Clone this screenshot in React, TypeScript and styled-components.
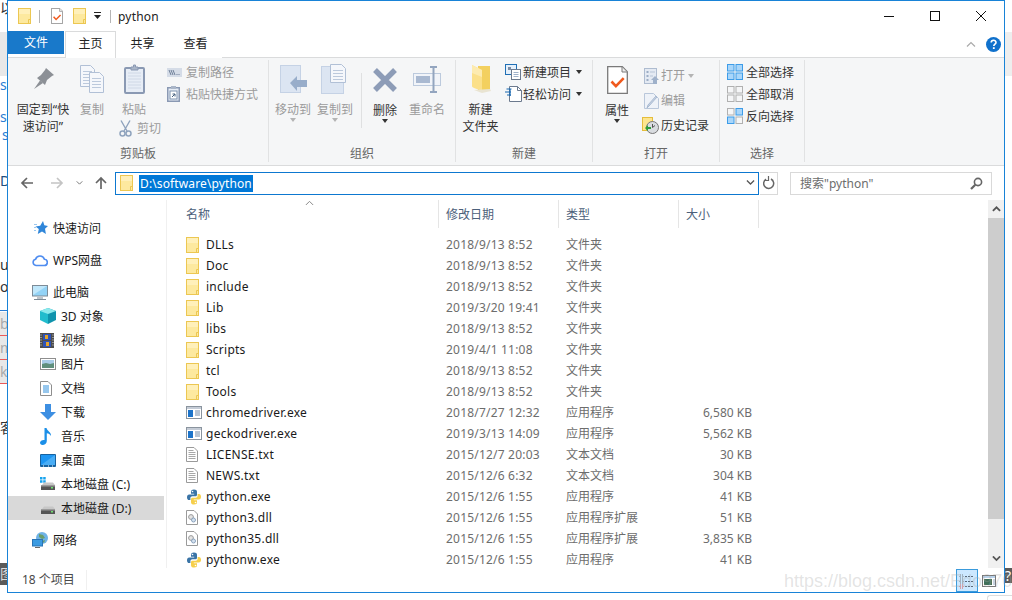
import React from "react";
import styled, { createGlobalStyle } from "styled-components";

const GlobalStyle = createGlobalStyle`
  html, body {
    margin: 0;
    padding: 0;
    background: #fff;
  }
  * {
    box-sizing: border-box;
  }
`;

const Page = styled.div`
  position: relative;
  display: flex;
  width: 1012px;
  height: 600px;
  overflow: hidden;
  background: #fff;
  font-family: "Noto Sans", "Noto Sans CJK SC", sans-serif;
  font-size: 12px;
  line-height: 17px;
  color: #1a1a1a;
`;

const Strip = styled.div`
  flex: none;
  width: 7px;
  height: 600px;
  overflow: hidden;
`;

const StripBit = styled.div<{ $h: number; $bg?: string; $color?: string; $pad?: number; $wavy?: boolean }>`
  height: ${(p) => p.$h}px;
  padding-left: ${(p) => p.$pad ?? 0}px;
  background: ${(p) => p.$bg ?? "transparent"};
  color: ${(p) => p.$color ?? "#333"};
  font-size: 14px;
  line-height: ${(p) => p.$h}px;
  white-space: nowrap;
  overflow: hidden;
  border-bottom: ${(p) => (p.$wavy ? "1px solid #ea5a5a" : "none")};
`;

const Middle = styled.div`
  flex: none;
  width: 998px;
  height: 600px;
`;

const Win = styled.div`
  display: flex;
  flex-direction: column;
  height: 593px;
  border: 1px solid #1883d7;
`;

const FooterCorner = styled.div`
  height: 5px;
  margin: 2px 0 0 980px;
  border-top: 1px solid #ddd;
  border-left: 1px solid #ddd;
  border-top-left-radius: 3px;
`;

const TitleBar = styled.div`
  display: flex;
  align-items: center;
  height: 30px;
  padding-left: 10px;
`;

const QuickItem = styled.div<{ $ml?: number }>`
  display: flex;
  align-items: center;
  margin-left: ${(p) => p.$ml ?? 0}px;
`;

const QuickSep = styled.div<{ $ml: number }>`
  width: 1px;
  height: 13px;
  margin-left: ${(p) => p.$ml}px;
  background: #b5b5b5;
`;

const Title = styled.div`
  margin-left: 7px;
  flex: 1;
  color: #222;
  letter-spacing: 0.2px;
`;

const WinButton = styled.div`
  display: flex;
  align-items: center;
  justify-content: center;
  width: 46px;
  height: 30px;
`;

const TabRow = styled.div`
  display: flex;
  align-items: flex-start;
  height: 27px;
  border-bottom: 1px solid #dadbdc;
`;

const FileTab = styled.div`
  width: 56px;
  height: 23px;
  background: #1979ca;
  color: #fff;
  text-align: center;
  line-height: 23px;
`;

const Tab = styled.div<{ $active?: boolean }>`
  width: ${(p) => (p.$active ? "51px" : "53px")};
  height: 27px;
  margin-left: ${(p) => (p.$active ? "1px" : "0")};
  background: #fff;
  border: 1px solid ${(p) => (p.$active ? "#dadbdc" : "transparent")};
  border-bottom: none;
  text-align: center;
  line-height: 24px;
  color: #222;
`;

const TabTail = styled.div`
  flex: 1;
  display: flex;
  align-items: center;
  justify-content: flex-end;
  gap: 10px;
  height: 26px;
  padding-right: 3px;
`;

const Ribbon = styled.div`
  display: flex;
  height: 108px;
  padding: 2px 0 3px;
  background: #f5f6f7;
  border-bottom: 1px solid #dadbdc;
`;

const Group = styled.div<{ $w: number }>`
  flex: none;
  display: flex;
  flex-direction: column;
  width: ${(p) => p.$w}px;
  border-right: 1px solid #e1e2e3;
`;

const GroupBody = styled.div<{ $pl?: number }>`
  flex: 1;
  display: flex;
  padding-left: ${(p) => p.$pl ?? 0}px;
`;

const GroupLabel = styled.div`
  height: 18px;
  text-align: center;
  line-height: 20px;
  color: #666;
`;

const LargeButton = styled.div<{ $w: number; $muted?: boolean }>`
  flex: none;
  display: flex;
  flex-direction: column;
  align-items: center;
  width: ${(p) => p.$w}px;
  text-align: center;
  color: ${(p) => (p.$muted ? "#9b9b9b" : "#333")};
`;

const LargeIcon = styled.div<{ $tall?: boolean }>`
  display: flex;
  align-items: center;
  justify-content: center;
  height: ${(p) => (p.$tall ? "42px" : "41px")};
  padding-bottom: 3px;
`;

const Caret = styled.span<{ $muted?: boolean; $ml?: number }>`
  display: inline-block;
  flex: none;
  width: 0;
  height: 0;
  margin-left: ${(p) => p.$ml ?? 0}px;
  border-left: 3.5px solid transparent;
  border-right: 3.5px solid transparent;
  border-top: 4px solid ${(p) => (p.$muted ? "#b4b4b4" : "#333")};
`;

const PasteStack = styled.div`
  flex: none;
  width: 54px;
`;

const CutRow = styled.div`
  display: flex;
  align-items: center;
  gap: 5px;
  height: 20px;
  margin-left: 6px;
  color: #9b9b9b;
`;

const SmallColumn = styled.div<{ $pt?: number; $rowH?: number }>`
  display: flex;
  flex-direction: column;
  padding-top: ${(p) => p.$pt ?? 1}px;
  --row: ${(p) => p.$rowH ?? 22}px;
`;

const SmallRow = styled.div<{ $slot: number; $muted?: boolean }>`
  display: grid;
  grid-template-columns: ${(p) => p.$slot}px auto auto;
  align-items: center;
  justify-content: start;
  height: var(--row);
  color: ${(p) => (p.$muted ? "#9b9b9b" : "#333")};
`;

const GroupDivider = styled.div`
  flex: none;
  width: 1px;
  height: 55px;
  margin: 13px 2px 0 5px;
  background: #dfe0e1;
`;

const AddressRow = styled.div`
  display: flex;
  align-items: center;
  height: 34px;
`;

const NavArrow = styled.div<{ $ml: number }>`
  display: flex;
  margin-left: ${(p) => p.$ml}px;
`;

const AddressBox = styled.div`
  display: flex;
  align-items: center;
  width: 644px;
  height: 23px;
  margin-left: 7px;
  padding: 0 3px 0 4px;
  border: 1px solid #0d78d0;
`;

const Selected = styled.span`
  flex: none;
  margin-left: 6px;
  height: 17px;
  padding: 0 1px;
  background: #0078d7;
  color: #fff;
  line-height: 17px;
  letter-spacing: 0.12px;
`;

const BoxSpacer = styled.div`
  flex: 1;
`;

const RefreshBox = styled.div`
  display: flex;
  align-items: center;
  justify-content: center;
  width: 18px;
  height: 23px;
  margin-left: 1px;
  border: 1px solid #d9d9d9;
  border-left: none;
`;

const SearchBox = styled.div`
  display: flex;
  align-items: center;
  justify-content: space-between;
  width: 202px;
  height: 23px;
  margin-left: 12px;
  padding: 0 8px 0 9px;
  border: 1px solid #d9d9d9;
  color: #6d6d6d;
`;

const Content = styled.div`
  display: flex;
  height: 368px;
  overflow: hidden;
`;

const Nav = styled.div`
  flex: none;
  width: 159px;
  padding: 16px 2px 0 0;
  border-right: 1px solid #f0f0f0;
`;

const NavRow = styled.div<{ $level?: number; $selected?: boolean; $gap?: boolean }>`
  display: grid;
  grid-template-columns: 21px auto;
  align-items: center;
  justify-content: start;
  height: 24px;
  margin-top: ${(p) => (p.$gap ? "8px" : "0")};
  padding-left: ${(p) => (p.$level ? 32 : 24)}px;
  background: ${(p) => (p.$selected ? "#d9d9d9" : "transparent")};
  color: #1a1a1a;
`;

const List = styled.div`
  flex: none;
  width: 821px;
  overflow: hidden;
`;

const HeaderRow = styled.div`
  display: grid;
  grid-template-columns: 272px 120px 120px 80px;
  height: 34px;
`;

const HeaderCell = styled.div<{ $first?: boolean }>`
  position: relative;
  height: 28px;
  padding: 6px 0 0 ${(p) => (p.$first ? 19 : 7)}px;
  color: #4c607a;
  border-right: 1px solid #e5e5e5;
`;

const SortMark = styled.span`
  position: absolute;
  top: 0;
  left: 138px;
  display: flex;
`;

const FileRow = styled.div`
  display: grid;
  grid-template-columns: 272px 120px 120px 73px;
  align-items: center;
  height: 21px;
`;

const NameCell = styled.div`
  display: grid;
  grid-template-columns: 20px auto;
  align-items: center;
  justify-content: start;
  padding-left: 19px;
  color: #1a1a1a;
  letter-spacing: 0.25px;
`;

const InfoCell = styled.div`
  padding-left: 7px;
  color: #6d6d6d;
  letter-spacing: 0.2px;
`;

const TypeCell = styled.div`
  padding-left: 7px;
  color: #6d6d6d;
`;

const SizeCell = styled.div`
  text-align: right;
  color: #6d6d6d;
`;

const Scrollbar = styled.div`
  flex: none;
  display: flex;
  flex-direction: column;
  width: 16px;
  height: 368px;
  background: #f0f0f0;
`;

const ScrollEnd = styled.div<{ $h: number }>`
  display: flex;
  align-items: center;
  justify-content: center;
  height: ${(p) => p.$h}px;
`;

const ScrollThumb = styled.div`
  height: 301px;
  background: #cdcdcd;
`;

const ScrollGap = styled.div`
  flex: 1;
`;

const StatusBar = styled.div`
  display: flex;
  align-items: center;
  height: 24px;
  padding-left: 14px;
  color: #4a4a4a;
`;

const StatusCount = styled.div`
  width: 65px;
  height: 20px;
  line-height: 20px;
  border-right: 1px solid #f0f0f0;
`;

const ViewButtons = styled.div`
  display: flex;
  align-items: flex-end;
  align-self: flex-end;
  margin-left: auto;
  padding-right: 6px;
`;

const ViewButton = styled.div<{ $active?: boolean }>`
  display: flex;
  align-items: center;
  justify-content: center;
  width: ${(p) => (p.$active ? "22px" : "18px")};
  height: 23px;
  margin-left: ${(p) => (p.$active ? "0" : "2px")};
  background: ${(p) => (p.$active ? "#cce8ff" : "transparent")};
  border: 1px solid ${(p) => (p.$active ? "#3a9bdc" : "transparent")};
`;

const Watermark = styled.div`
  position: absolute;
  left: 784px;
  top: 569px;
  font-family: "Liberation Sans", sans-serif;
  font-size: 18px;
  line-height: 24px;
  white-space: nowrap;
  color: rgba(170, 170, 170, 0.32);
`;

/* ---------- icons ---------- */

type IconProps = { w?: number; h?: number };

const Folder = ({ w = 13, h = 16 }: IconProps) => (
  <svg width={w} height={h} viewBox="0 0 13 16">
    <rect x=".5" y=".5" width="12" height="15" fill="#fde99f" stroke="#ecc752" />
    <path d="M10.5 15.5v-4h2" fill="none" stroke="#ecc752" />
    <rect x="1" y="1" width="11" height="5" fill="#fff0ba" />
  </svg>
);

const BigFolder = () => (
  <svg width="20" height="30" viewBox="0 0 20 30">
    <path d="M7 2h12v24H7z" fill="#f3d05f" />
    <path d="M1 1l10 5v21l-8-3c-1-.5-2-1-2-2z" fill="#fbe08a" />
    <path d="M1 1l10 5v7L1 9z" fill="#fdebb0" />
    <path d="M3 26l16-1 1 2-9 2z" fill="#e9e4d2" />
  </svg>
);

const Check = ({ w, h }: { w: number; h: number }) => (
  <svg width={w} height={h} viewBox="0 0 21 28">
    <path d="M.7.7h14.6l5 5v21.6H.7z" fill="#fff" stroke="#7a7a7a" strokeWidth="1.3" />
    <path d="M15 1v5h5" fill="#eee" stroke="#7a7a7a" />
    <path d="M4.5 15.5l4.4 4.6 7.8-8" fill="none" stroke="#f05a1e" strokeWidth="2.6" />
  </svg>
);

const Pin = () => (
  <svg width="21" height="22" viewBox="0 0 21 22">
    <path d="M1 21l6-8.5 3 2.5z" fill="#8c9096" />
    <path d="M4 10l4-3 4-5 1-2 8 7-2 1-5 4-2 5z" fill="#8c9096" />
  </svg>
);

const PageLines = ({ x, y, w, h }: { x: number; y: number; w: number; h: number }) => (
  <g>
    <path
      d={`M${x + 0.5} ${y + 0.5}h${w - 5}l4 4v${h - 5}h-${w - 1}z`}
      fill="#f5f7fb"
      stroke="#b1c0d6"
    />
    {Array.from({ length: Math.floor((h - 7) / 3) }, (_, i) => (
      <path key={i} d={`M${x + 3} ${y + 6.5 + i * 3}h${w - 6}`} stroke="#bcc9dc" />
    ))}
  </g>
);

const CopyDocs = () => (
  <svg width="24" height="28" viewBox="0 0 24 28">
    <PageLines x={0} y={0} w={15} h={22} />
    <PageLines x={9} y={7} w={15} h={21} />
  </svg>
);

const Clipboard = () => (
  <svg width="21" height="30" viewBox="0 0 21 30">
    <rect x="1" y="4" width="19" height="25" rx="1" fill="#e7edf6" stroke="#8a99b3" strokeWidth="2" />
    <path d="M4 9h13M4 12h13M4 15h13M4 18h13M4 21h13M4 24h13" stroke="#cfd8e6" />
    <path d="M7 6V3h2.5V1h2v2H14v3z" fill="#aab6c8" stroke="#8a99b3" />
  </svg>
);

const Scissors = () => (
  <svg width="13" height="17" viewBox="0 0 13 17" fill="none" stroke="#8fa3bd">
    <path d="M2 .5l6 10.5M11 .5L5 11" strokeWidth="1.4" />
    <circle cx="3.5" cy="13.5" r="2.5" strokeWidth="1.5" />
    <circle cx="9.5" cy="13.5" r="2.5" strokeWidth="1.5" />
  </svg>
);

const CopyPath = () => (
  <svg width="15" height="9" viewBox="0 0 15 9">
    <rect width="15" height="9" fill="#d5dce7" />
    <path d="M2 2l2 5M4 2l2 5M6 2l2 5" stroke="#6e7f98" />
    <path d="M9.5 6.5h1M11.5 6.5h1" stroke="#6e7f98" />
  </svg>
);

const PasteShortcut = () => (
  <svg width="13" height="16" viewBox="0 0 13 16">
    <rect x=".75" y="1.75" width="11.5" height="13.5" fill="#e7edf6" stroke="#8a99b3" strokeWidth="1.5" />
    <rect x="4" y="0" width="5" height="3" fill="#aab6c8" />
    <rect x="3" y="5" width="7" height="8" fill="#fff" stroke="#7f93ae" />
    <path d="M5 11l3-3M5.5 8H8v2.5" fill="none" stroke="#46607f" />
  </svg>
);

const MoveTo = () => (
  <svg width="27" height="28" viewBox="0 0 27 28">
    <rect x=".5" y=".5" width="20" height="27" fill="#dce5f2" stroke="#c5d2e5" />
    <path d="M10 19l7-7v4h10v7H17v4z" transform="translate(0 -1)" fill="#98adca" />
  </svg>
);

const CopyTo = () => (
  <svg width="28" height="30" viewBox="0 0 28 30">
    <rect x=".5" y="2.5" width="22" height="27" fill="#dce5f2" stroke="#c5d2e5" />
    <PageLines x={9} y={0} w={16} h={19} />
  </svg>
);

const DeleteX = () => (
  <svg width="26" height="26" viewBox="0 0 26 26">
    <path d="M3 3l20 20M23 3L3 23" stroke="#8d9cb7" strokeWidth="5.4" />
  </svg>
);

const Rename = () => (
  <svg width="28" height="27" viewBox="0 0 28 27">
    <rect x=".5" y="7.5" width="27" height="12" fill="#f1f4f9" stroke="#bccadd" />
    <rect x="3" y="10" width="14" height="7" fill="#a9b9d1" />
    <path d="M17 1h7M17 26h7M20.5 1v25" fill="none" stroke="#93a5bf" strokeWidth="2" />
  </svg>
);

const NewItem = () => (
  <svg width="16" height="16" viewBox="0 0 16 16">
    <rect x=".5" y=".5" width="11" height="10" fill="#e5f0fb" stroke="#1f6fb5" />
    <rect x="3" y="3" width="3" height="3" fill="#7a8ba3" />
    <rect x="6.5" y="5.5" width="9" height="10" fill="#fff" stroke="#6c7a8e" />
    <path d="M8.5 8.5h5M8.5 10.5h5M8.5 12.5h5" stroke="#9fb2cb" />
  </svg>
);

const EasyAccess = () => (
  <svg width="17" height="16" viewBox="0 0 17 16">
    <path d="M4.5.5h8l4 4v11h-12z" fill="#fff" stroke="#6c7a8e" />
    <path d="M12.5.5v4h4" fill="none" stroke="#6c7a8e" />
    <path d="M1.5 3h5M0 6h6M2 9h4M5 3v7" fill="none" stroke="#1666b0" strokeWidth="1.2" />
  </svg>
);

const OpenItem = () => (
  <svg width="18" height="16" viewBox="-3 0 18 16">
    <rect x=".5" y=".5" width="12" height="15" fill="#e4eaf3" stroke="#aebcd0" />
    <path d="M2.5 3h2v2h-2zM2.5 7h2v2h-2zM2.5 11h2v2h-2z" fill="#9cadc5" />
    <path d="M6 4h5M6 8h3" stroke="#b7c4d6" />
    <path d="M11 8l4 4h-2v4h-4v-4H7z" fill="#9fb1ca" />
  </svg>
);

const EditItem = () => (
  <svg width="18" height="16" viewBox="-3 0 18 16">
    <path d="M.5.5h9l5 5v10H.5z" fill="#eef2f8" stroke="#b9c7da" />
    <path d="M13 4L5 13l-2 2 1-3 8-9z" fill="#c7d3e4" stroke="#a9bad1" />
  </svg>
);

const History = () => (
  <svg width="18" height="17" viewBox="-1 0 18 17">
    <rect x=".5" y=".5" width="10" height="13" fill="#fde58e" stroke="#e5bd3c" />
    <circle cx="10.5" cy="10.5" r="6" fill="#d9dce0" stroke="#777" />
    <path d="M10.5 7v3.5l2.5-2" fill="none" stroke="#555" />
    <path d="M3 11l3-3v2h3v2H6v2z" fill="#2f9c3a" />
  </svg>
);

const Tiles = ({ on }: { on: boolean[] }) => (
  <svg width="16" height="16" viewBox="0 0 16 16">
    {[
      [0, 0],
      [8.5, 0],
      [0, 8.5],
      [8.5, 8.5],
    ].map(([x, y], i) => (
      <rect
        key={i}
        x={x + 0.5}
        y={y + 0.5}
        width="6.5"
        height="6.5"
        fill={on[i] ? "#a9d6fa" : "#f5f6f7"}
        stroke={on[i] ? "#3d9ce8" : "#b0b0b0"}
      />
    ))}
  </svg>
);

const ArrowIcon = ({ dir, color }: { dir: "left" | "right" | "up"; color: string }) => {
  const rot = dir === "left" ? 0 : dir === "right" ? 180 : 90;
  return (
    <svg width="14" height="14" viewBox="0 0 14 14" fill="none" stroke={color} strokeWidth="1.7">
      <path d="M13 7H2M7 2L2 7l5 5" transform={`rotate(${rot} 7 7)`} />
    </svg>
  );
};

const Chevron = ({ up, color = "#666", w = 9, sw = 1.4 }: { up?: boolean; color?: string; w?: number; sw?: number }) => (
  <svg width={w} height={w * 0.6} viewBox="0 0 10 6" fill="none" stroke={color} strokeWidth={sw}>
    <path d={up ? "M1 5.5l4-4 4 4" : "M1 .5l4 4 4-4"} />
  </svg>
);

const Refresh = () => (
  <svg width="12" height="14" viewBox="0 0 12 14" fill="none" stroke="#666" strokeWidth="1.5">
    <path d="M3 3.2A5 5 0 1 0 8 3" />
    <path d="M5.5 0v4.5H1" strokeWidth="1.2" />
  </svg>
);

const SearchGlass = () => (
  <svg width="13" height="13" viewBox="0 0 13 13" fill="none" stroke="#666" strokeWidth="1.6">
    <circle cx="8" cy="5" r="3.6" />
    <path d="M5.3 7.7L1 12" strokeWidth="2.2" />
  </svg>
);

const Help = () => (
  <svg width="15" height="15" viewBox="0 0 15 15">
    <circle cx="7.5" cy="7.5" r="7.5" fill="#1071cc" />
    <path d="M5.2 5.6c0-3 4.8-3 4.8-.2 0 1.7-2.2 1.8-2.2 3.6" fill="none" stroke="#fff" strokeWidth="1.6" />
    <rect x="6.9" y="10.2" width="1.8" height="1.8" fill="#fff" />
  </svg>
);

const WinMin = () => (
  <svg width="10" height="10" viewBox="0 0 10 10"><path d="M0 5.5h10" stroke="#111" /></svg>
);
const WinMax = () => (
  <svg width="10" height="10" viewBox="0 0 10 10"><rect x=".5" y=".5" width="9" height="9" fill="none" stroke="#111" /></svg>
);
const WinClose = () => (
  <svg width="10" height="10" viewBox="0 0 10 10"><path d="M0 0l10 10M10 0L0 10" stroke="#111" /></svg>
);

const QuickDown = () => (
  <svg width="9" height="8" viewBox="0 0 9 8">
    <path d="M1 .5h7" stroke="#222" />
    <path d="M1 3h7L4.500 7z" fill="#222" />
  </svg>
);

const Star = () => (
  <svg width="16" height="14" viewBox="-2 0 16 14">
    <path d="M9 0l1.300 4.200L14 5l-3 2.800.9 5.200L8 10.500 3.800 13l1-5L1.500 5.400l4.700-.6z" fill="#2f86d9" />
    <path d="M0 3.500h3M0 6.500h2M0 9.500h2" stroke="#9cc8ef" />
  </svg>
);

const Cloud = () => (
  <svg width="16" height="14" viewBox="0 0 16 14" fill="none" stroke="#4f8df0" strokeWidth="1.6">
    <path d="M4 12.500A3.200 3.200 0 0 1 3.600 6.200 4.600 4.600 0 0 1 12.400 6.300 3.100 3.100 0 0 1 12 12.500z" />
  </svg>
);

const Monitor = () => (
  <svg width="16" height="15" viewBox="0 0 16 15">
    <rect x=".5" y=".5" width="15" height="10.500" fill="#93d3f6" stroke="#7d8b97" />
    <path d="M1 1h14L1 10z" fill="#bfe7fb" />
    <path d="M5 13h6M2 14.500h12" stroke="#7d8b97" />
  </svg>
);

const Cube = () => (
  <svg width="16" height="16" viewBox="0 0 16 16">
    <path d="M8 0l8 3v9l-8 4z" fill="#0f93ad" />
    <path d="M8 0L0 3v9l8 4z" fill="#22bccd" />
    <path d="M8 0l8 3-8 3-8-3z" fill="#8ce9ec" />
  </svg>
);

const Film = () => (
  <svg width="14" height="15" viewBox="0 0 14 15">
    <rect width="14" height="15" fill="#4d4d4d" />
    <rect x="3" y="1" width="8" height="6" fill="#2d53b8" />
    <rect x="3" y="8" width="8" height="6" fill="#2d53b8" />
    <path d="M5 2h3v4H5zM6 9h3v4H6z" fill="#e4a42a" />
    <path d="M1 1.500v12M13 1.500v12" stroke="#ddd" strokeDasharray="1 1.500" />
  </svg>
);

const Picture = () => (
  <svg width="16" height="12" viewBox="0 0 16 12">
    <rect x=".5" y=".5" width="15" height="11" fill="#fff" stroke="#8e8e8e" />
    <rect x="2" y="2" width="12" height="4" fill="#a9cce8" />
    <path d="M2 6l4-1 4 1 4-1v5H2z" fill="#5f8f7c" />
  </svg>
);

const DocBlue = () => (
  <svg width="12" height="15" viewBox="0 0 12 15">
    <path d="M.5.500h7.500l3.500 3.500v10.500H.5z" fill="#fff" stroke="#8e8e8e" />
    <path d="M3 5h6M3 7h6M3 9h6M3 11h6" stroke="#2f8fdc" />
  </svg>
);

const DownArrow = () => (
  <svg width="16" height="16" viewBox="0 0 16 16">
    <path d="M5 0h6v8h5l-8 8-8-8h5z" fill="#3d8fe2" />
  </svg>
);

const Note = () => (
  <svg width="12" height="17" viewBox="0 0 12 17">
    <path d="M4.500 0h2c.5 3 5 4 4.500 8-.8-1.800-2.500-2.500-4.200-2.800V13c0 2.500-2.200 4-4.300 4C1 17 0 16 0 14.800 0 13 2.500 11.500 4.500 12z" fill="#1b8fe8" />
  </svg>
);

const Desktop = () => (
  <svg width="16" height="13" viewBox="0 0 16 13">
    <rect width="16" height="13" rx="1" fill="#17629f" />
    <rect x="1" y="1" width="14" height="10" fill="#1c95f2" />
    <path d="M1 11L15 1v10z" fill="#49adf5" />
    <path d="M3 12h1M8 12h1M12 12h1" stroke="#fff" />
  </svg>
);

const Drive = ({ win }: { win?: boolean }) => (
  <svg width="16" height="14" viewBox="0 0 16 14">
    {win && <path d="M0 0h2.500v2.500H0zM3.200 0h2.500v2.500H3.200zM0 3.200h2.500v2.500H0zM3.200 3.200h2.500v2.500H3.200z" fill="#17a3ee" />}
    <path d="M2 8l2-2.500h9L15 8z" fill="#c7c7c7" />
    <rect x="1" y="8" width="14" height="5" fill="#555" />
    <rect x="1" y="8" width="14" height="1.500" fill="#9a9a9a" />
    <rect x="11" y="10" width="2" height="1.500" fill="#6fe06f" />
  </svg>
);

const NetworkIcon = () => (
  <svg width="16" height="16" viewBox="0 0 16 16">
    <circle cx="10" cy="6" r="6" fill="#6fb3e6" />
    <path d="M7 2l4 1 2 3-3 1-3-2zM10 9l3-1-1 3z" fill="#6a9d6a" />
    <rect x=".5" y="7.500" width="10" height="6.500" fill="#3b9be2" stroke="#2a74b5" />
    <path d="M3 15.500h5" stroke="#6a6a6a" />
  </svg>
);

const ExeIcon = () => (
  <svg width="16" height="13" viewBox="0 0 16 13">
    <rect x=".5" y=".5" width="15" height="12" fill="#fff" stroke="#8a949e" />
    <rect x="1" y="1" width="14" height="2" fill="#c5ccd6" />
    <rect x="2" y="4" width="5" height="7" fill="#1c73c9" />
    <path d="M9 5h5M9 7h5M9 9h5" stroke="#6f89a8" />
  </svg>
);

const TxtIcon = () => (
  <svg width="12" height="15" viewBox="0 0 12 15">
    <path d="M.5.500h7.500l3.500 3.500v10.500H.5z" fill="#fff" stroke="#9a9a9a" />
    <path d="M2.500 3.500h5M2.500 5.500h7M2.500 7.500h7M2.500 9.500h7M2.500 11.500h7" stroke="#a8a8a8" />
  </svg>
);

const PythonIcon = () => (
  <svg width="16" height="16" viewBox="0 0 16 16">
    <path
      d="M8 .5C5.500.5 5 1.500 5 2.800V4.700h3.200v.7H3.200C1.800 5.400 1 6.500 1 8.200c0 1.800.8 2.900 2 2.900h1.400V9.200c0-1.200.9-1.900 2-1.900h3.200c1 0 1.400-.7 1.400-1.500V2.800C11 1.300 9.800.5 8 .5z"
      fill="#3a74a6"
    />
    <path
      d="M8 15.500c2.500 0 3-1 3-2.300v-1.900H7.800v-.7h5c1.400 0 2.200-1.100 2.200-2.800 0-1.800-.8-2.900-2-2.900h-1.400v1.900c0 1.200-.9 1.900-2 1.900H6.400c-1 0-1.400.7-1.400 1.500v3c0 1.500 1.200 2.300 3 2.300z"
      fill="#f6cf4b"
    />
    <circle cx="6.500" cy="2.500" r=".8" fill="#fff" />
    <circle cx="9.500" cy="13.500" r=".8" fill="#fff" />
  </svg>
);

const DllIcon = () => (
  <svg width="12" height="15" viewBox="0 0 12 15">
    <path d="M.5.500h7.500l3.500 3.500v10.500H.5z" fill="#fff" stroke="#9a9a9a" />
    <circle cx="5" cy="7" r="2.400" fill="#e4e4e4" stroke="#9a9a9a" />
    <circle cx="7.500" cy="10" r="2" fill="#d5e2f0" stroke="#8aa2bd" />
  </svg>
);

const DetailsView = () => (
  <svg width="16" height="16" viewBox="0 0 16 16">
    <path d="M1 2h3v3H1z" fill="none" stroke="#666" strokeWidth=".8" strokeDasharray="1 1" />
    <path d="M1 7h3v3H1z" fill="none" stroke="#666" strokeWidth=".8" strokeDasharray="1 1" />
    <path d="M1 12h3v3H1z" fill="none" stroke="#e0392b" strokeWidth=".8" strokeDasharray="1 1" />
    <path d="M6 3.500h9M6 8.500h9M6 13.500h9" stroke="#5a6a7a" strokeDasharray="2 1" />
  </svg>
);

const LargeView = () => (
  <svg width="14" height="12" viewBox="0 0 14 12">
    <rect x=".5" y=".5" width="13" height="11" fill="#fff" stroke="#777" />
    <rect x="1" y="1" width="12" height="2" fill="#b9d2ea" />
    <rect x="2" y="4" width="8" height="6" fill="#3f6f58" />
    <rect x="11" y="4" width="2" height="6" fill="#c9d5e1" />
  </svg>
);

/* ---------- data ---------- */

const folders = [
  ["DLLs", "2018/9/13 8:52"],
  ["Doc", "2018/9/13 8:52"],
  ["include", "2018/9/13 8:52"],
  ["Lib", "2019/3/20 19:41"],
  ["libs", "2018/9/13 8:52"],
  ["Scripts", "2019/4/1 11:08"],
  ["tcl", "2018/9/13 8:52"],
  ["Tools", "2018/9/13 8:52"],
];

const files: [string, string, string, string, React.ReactNode][] = [
  ["chromedriver.exe", "2018/7/27 12:32", "应用程序", "6,580 KB", <ExeIcon />],
  ["geckodriver.exe", "2019/3/13 14:09", "应用程序", "5,562 KB", <ExeIcon />],
  ["LICENSE.txt", "2015/12/7 20:03", "文本文档", "30 KB", <TxtIcon />],
  ["NEWS.txt", "2015/12/6 6:32", "文本文档", "304 KB", <TxtIcon />],
  ["python.exe", "2015/12/6 1:55", "应用程序", "41 KB", <PythonIcon />],
  ["python3.dll", "2015/12/6 1:55", "应用程序扩展", "51 KB", <DllIcon />],
  ["python35.dll", "2015/12/6 1:55", "应用程序扩展", "3,835 KB", <DllIcon />],
  ["pythonw.exe", "2015/12/6 1:55", "应用程序", "41 KB", <PythonIcon />],
];

const navItems: { label: string; icon: React.ReactNode; level?: number; gap?: boolean; selected?: boolean }[] = [
  { label: "快速访问", icon: <Star /> },
  { label: "WPS网盘", icon: <Cloud />, gap: true },
  { label: "此电脑", icon: <Monitor />, gap: true },
  { label: "3D 对象", icon: <Cube />, level: 1 },
  { label: "视频", icon: <Film />, level: 1 },
  { label: "图片", icon: <Picture />, level: 1 },
  { label: "文档", icon: <DocBlue />, level: 1 },
  { label: "下载", icon: <DownArrow />, level: 1 },
  { label: "音乐", icon: <Note />, level: 1 },
  { label: "桌面", icon: <Desktop />, level: 1 },
  { label: "本地磁盘 (C:)", icon: <Drive win />, level: 1 },
  { label: "本地磁盘 (D:)", icon: <Drive />, level: 1, selected: true },
  { label: "网络", icon: <NetworkIcon />, gap: true },
];

export default function App() {
  return (
    <Page>
      <GlobalStyle />
      <Strip>
        <StripBit $h={16} $color="#333">以</StripBit>
        <StripBit $h={16} />
        <StripBit $h={44} $bg="#e8e8e8" />
        <StripBit $h={2} />
        <StripBit $h={14} $color="#2b7cd3">s</StripBit>
        <StripBit $h={18} />
        <StripBit $h={14} $color="#2b7cd3">s</StripBit>
        <StripBit $h={5} />
        <StripBit $h={12} $color="#2b7cd3" $pad={2}>s</StripBit>
        <StripBit $h={33} />
        <StripBit $h={14} $color="#1f4f80">DI</StripBit>
        <StripBit $h={70} />
        <StripBit $h={14}>ur</StripBit>
        <StripBit $h={8} />
        <StripBit $h={14}>o</StripBit>
        <StripBit $h={16} />
        <StripBit $h={1} $bg="#2b7cd3" />
        <StripBit $h={1} />
        <StripBit $h={24} $bg="#e8e8e8" $color="#aaa" $wavy>b</StripBit>
        <StripBit $h={24} $bg="#e8e8e8" $color="#aaa" $wavy>m</StripBit>
        <StripBit $h={24} $bg="#e8e8e8" $color="#aaa" $wavy>k</StripBit>
        <StripBit $h={36} />
        <StripBit $h={16} $color="#333">客</StripBit>
        <StripBit $h={127} />
        <StripBit $h={22} $bg="#5a5a5a" $color="#ddd">图</StripBit>
      </Strip>

      <Middle>
        <Win>
          <TitleBar>
            <QuickItem><Folder /></QuickItem>
            <QuickSep $ml={8} />
            <QuickItem $ml={11}><Check w={12} h={16} /></QuickItem>
            <QuickItem $ml={10}><Folder /></QuickItem>
            <QuickItem $ml={7}><QuickDown /></QuickItem>
            <QuickSep $ml={8} />
            <Title>python</Title>
            <WinButton><WinMin /></WinButton>
            <WinButton><WinMax /></WinButton>
            <WinButton><WinClose /></WinButton>
          </TitleBar>

          <TabRow>
            <FileTab>文件</FileTab>
            <Tab $active>主页</Tab>
            <Tab>共享</Tab>
            <Tab>查看</Tab>
            <TabTail>
              <Chevron up color="#aaa" w={10} sw={1.2} />
              <Help />
            </TabTail>
          </TabRow>

          <Ribbon>
            <Group $w={261}>
              <GroupBody $pl={7}>
                <LargeButton $w={56}>
                  <LargeIcon><Pin /></LargeIcon>
                  固定到“快
                  <br />
                  速访问”
                </LargeButton>
                <LargeButton $w={42} $muted>
                  <LargeIcon><CopyDocs /></LargeIcon>
                  复制
                </LargeButton>
                <PasteStack>
                  <LargeButton $w={42} $muted>
                    <LargeIcon><Clipboard /></LargeIcon>
                    粘贴
                  </LargeButton>
                  <CutRow><Scissors />剪切</CutRow>
                </PasteStack>
                <SmallColumn>
                  <SmallRow $slot={19} $muted><CopyPath /><span>复制路径</span></SmallRow>
                  <SmallRow $slot={19} $muted><PasteShortcut /><span>粘贴快捷方式</span></SmallRow>
                </SmallColumn>
              </GroupBody>
              <GroupLabel>剪贴板</GroupLabel>
            </Group>

            <Group $w={187}>
              <GroupBody $pl={3}>
                <LargeButton $w={42} $muted>
                  <LargeIcon><MoveTo /></LargeIcon>
                  移动到
                  <Caret $muted />
                </LargeButton>
                <LargeButton $w={42} $muted>
                  <LargeIcon><CopyTo /></LargeIcon>
                  复制到
                  <Caret $muted />
                </LargeButton>
                <GroupDivider />
                <LargeButton $w={42}>
                  <LargeIcon $tall><DeleteX /></LargeIcon>
                  删除
                  <Caret />
                </LargeButton>
                <LargeButton $w={42} $muted>
                  <LargeIcon><Rename /></LargeIcon>
                  重命名
                </LargeButton>
              </GroupBody>
              <GroupLabel>组织</GroupLabel>
            </Group>

            <Group $w={137}>
              <GroupBody>
                <LargeButton $w={49}>
                  <LargeIcon><BigFolder /></LargeIcon>
                  新建
                  <br />
                  文件夹
                </LargeButton>
                <SmallColumn>
                  <SmallRow $slot={18}>
                    <NewItem />
                    <span>新建项目</span>
                    <Caret $ml={5} />
                  </SmallRow>
                  <SmallRow $slot={18}>
                    <EasyAccess />
                    <span>轻松访问</span>
                    <Caret $ml={5} />
                  </SmallRow>
                </SmallColumn>
              </GroupBody>
              <GroupLabel>新建</GroupLabel>
            </Group>

            <Group $w={127}>
              <GroupBody>
                <LargeButton $w={48}>
                  <LargeIcon $tall><Check w={21} h={28} /></LargeIcon>
                  属性
                  <Caret />
                </LargeButton>
                <SmallColumn $pt={3} $rowH={25}>
                  <SmallRow $slot={20} $muted>
                    <OpenItem />
                    <span>打开</span>
                    <Caret $muted $ml={3} />
                  </SmallRow>
                  <SmallRow $slot={20} $muted><EditItem /><span>编辑</span></SmallRow>
                  <SmallRow $slot={20}><History /><span>历史记录</span></SmallRow>
                </SmallColumn>
              </GroupBody>
              <GroupLabel>打开</GroupLabel>
            </Group>

            <Group $w={85}>
              <GroupBody $pl={7}>
                <SmallColumn>
                  <SmallRow $slot={19}><Tiles on={[true, true, true, true]} /><span>全部选择</span></SmallRow>
                  <SmallRow $slot={19}><Tiles on={[false, false, false, false]} /><span>全部取消</span></SmallRow>
                  <SmallRow $slot={19}><Tiles on={[false, true, true, false]} /><span>反向选择</span></SmallRow>
                </SmallColumn>
              </GroupBody>
              <GroupLabel>选择</GroupLabel>
            </Group>
          </Ribbon>

          <AddressRow>
            <NavArrow $ml={12}><ArrowIcon dir="left" color="#666" /></NavArrow>
            <NavArrow $ml={16}><ArrowIcon dir="right" color="#c4c4c4" /></NavArrow>
            <NavArrow $ml={12}><Chevron color="#777" w={7} /></NavArrow>
            <NavArrow $ml={11}><ArrowIcon dir="up" color="#666" /></NavArrow>
            <AddressBox>
              <Folder />
              <Selected>D:\software\python</Selected>
              <BoxSpacer />
              <Chevron color="#555" />
            </AddressBox>
            <RefreshBox><Refresh /></RefreshBox>
            <SearchBox>
              <span>搜索"python"</span>
              <SearchGlass />
            </SearchBox>
          </AddressRow>

          <Content>
            <Nav>
              {navItems.map((item) => (
                <NavRow key={item.label} $level={item.level} $gap={item.gap} $selected={item.selected}>
                  {item.icon}
                  <span>{item.label}</span>
                </NavRow>
              ))}
            </Nav>

            <List>
              <HeaderRow>
                <HeaderCell $first>
                  名称
                  <SortMark><Chevron up color="#888" w={9} sw={1.1} /></SortMark>
                </HeaderCell>
                <HeaderCell>修改日期</HeaderCell>
                <HeaderCell>类型</HeaderCell>
                <HeaderCell>大小</HeaderCell>
              </HeaderRow>
              {folders.map(([name, date]) => (
                <FileRow key={name}>
                  <NameCell><Folder /><span>{name}</span></NameCell>
                  <InfoCell>{date}</InfoCell>
                  <TypeCell>文件夹</TypeCell>
                  <SizeCell />
                </FileRow>
              ))}
              {files.map(([name, date, type, size, icon]) => (
                <FileRow key={name}>
                  <NameCell>{icon}<span>{name}</span></NameCell>
                  <InfoCell>{date}</InfoCell>
                  <TypeCell>{type}</TypeCell>
                  <SizeCell>{size}</SizeCell>
                </FileRow>
              ))}
            </List>

            <Scrollbar>
              <ScrollEnd $h={18}><Chevron up color="#555" w={9} sw={2} /></ScrollEnd>
              <ScrollThumb />
              <ScrollGap />
              <ScrollEnd $h={18}><Chevron color="#555" w={9} sw={2} /></ScrollEnd>
            </Scrollbar>
          </Content>

          <StatusBar>
            <StatusCount>18 个项目</StatusCount>
            <ViewButtons>
              <ViewButton $active><DetailsView /></ViewButton>
              <ViewButton><LargeView /></ViewButton>
            </ViewButtons>
          </StatusBar>
        </Win>
        <FooterCorner />
      </Middle>

      <Strip>
        <StripBit $h={32} />
        <StripBit $h={44} $bg="#eeeeee" />
        <StripBit $h={492} />
        <StripBit $h={15} $bg="#5a5a5a" $color="#fff">?</StripBit>
        <StripBit $h={12} />
        <StripBit $h={1} $bg="#ddd" />
      </Strip>

      <Watermark>https://blog.csdn.net/Edo9700</Watermark>
    </Page>
  );
}
